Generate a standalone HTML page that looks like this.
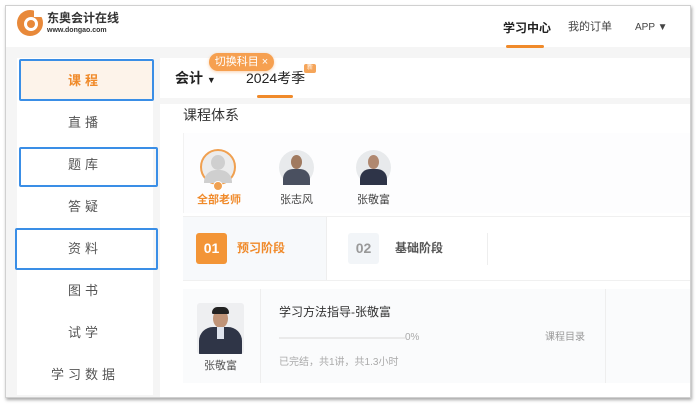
<!DOCTYPE html><html><head><meta charset="utf-8"><style>
*{margin:0;padding:0;box-sizing:border-box}
body{width:700px;height:406px;background:#fff;font-family:"Liberation Sans","Noto Sans CJK SC",sans-serif;position:relative;overflow:hidden}
.a{position:absolute}
.frame{left:5px;top:5px;width:686px;height:393px;border:1px solid #d0d0d0;box-shadow:1px 2px 3px rgba(0,0,0,.35);background:#f5f5f5;overflow:hidden}
.t{white-space:nowrap;line-height:1}
.side{font-size:13px;color:#555;letter-spacing:4px;width:136px;text-align:center;left:17px}
.box{border:2px solid #3a8ee6;border-radius:2px}
.av{border-radius:50%;background:#e8eaec;overflow:hidden}
</style></head><body>
<div class="a frame"></div>
<div class="a" style="left:6px;top:6px;width:684px;height:41px;background:#fff"></div>
<div class="a" style="left:17px;top:10px;width:26px;height:26px;border-radius:50%;background:#e8893a"></div>
<div class="a" style="left:24px;top:17px;width:14px;height:14px;border-radius:50%;background:#fff"></div>
<div class="a" style="left:27px;top:20px;width:8px;height:8px;border-radius:50%;background:#e8893a"></div>
<div class="a" style="left:34px;top:8px;width:10px;height:9px;background:#fff"></div>
<div class="a t" style="left:47px;top:12px;font-size:12px;font-weight:bold;color:#333">东奥会计在线</div>
<div class="a t" style="left:47px;top:27px;font-size:7px;font-weight:bold;color:#333">www.dongao.com</div>
<div class="a t" style="left:503px;top:22px;font-size:12px;color:#222;font-weight:bold">学习中心</div>
<div class="a" style="left:506px;top:45px;width:38px;height:3px;background:#f08a2a;border-radius:2px"></div>
<div class="a t" style="left:568px;top:22px;font-size:11px;color:#444">我的订单</div>
<div class="a t" style="left:635px;top:23px;font-size:10px;color:#444">APP ▼</div>
<!-- sidebar -->
<div class="a" style="left:17px;top:58px;width:136px;height:337px;background:#fff"></div>
<div class="a box" style="left:19px;top:59px;width:135px;height:42px;background:#fdf3ea"></div>
<div class="a t side" style="top:74px;color:#f08a2a;font-weight:bold">课程</div>
<div class="a t side" style="top:116px">直播</div>
<div class="a box" style="left:19px;top:147px;width:139px;height:40px"></div>
<div class="a t side" style="top:158px">题库</div>
<div class="a t side" style="top:200px">答疑</div>
<div class="a box" style="left:15px;top:228px;width:143px;height:42px"></div>
<div class="a t side" style="top:242px">资料</div>
<div class="a t side" style="top:284px">图书</div>
<div class="a t side" style="top:326px">试学</div>
<div class="a t side" style="top:368px">学习数据</div>
<!-- top card -->
<div class="a" style="left:160px;top:58px;width:530px;height:40px;background:#fff"></div>
<div class="a t" style="left:175px;top:71px;font-size:14px;font-weight:bold;color:#222">会计 <span style="font-size:9px">▼</span></div>
<div class="a t" style="left:246px;top:71px;font-size:14px;color:#222">2024考季</div>
<div class="a" style="left:257px;top:95px;width:36px;height:3px;background:#f08a2a;border-radius:2px"></div>
<div class="a t" style="left:304px;top:64px;width:12px;height:9px;background:#f5a55a;color:#fff;font-size:6px;text-align:center;line-height:9px;border-radius:2px">新</div>
<div class="a t" style="left:209px;top:53px;width:65px;height:18px;border-radius:9px;background:#f6a050;color:#fff;font-size:11px;line-height:18px;text-align:center;box-shadow:0 1px 3px rgba(240,140,50,.4)">切换科目 ×</div>
<!-- main -->
<div class="a" style="left:160px;top:104px;width:530px;height:293px;background:#fff"></div>
<div class="a t" style="left:183px;top:108px;font-size:14px;color:#333">课程体系</div>
<div class="a" style="left:183px;top:133px;width:507px;height:80px;background:#fdfdfe;border-left:1px solid #f2f2f2"></div>
<div class="a av" style="left:200px;top:149px;width:36px;height:36px;border:2px solid #f0a050;background:#ececec"></div>
<div class="a" style="left:211px;top:155px;width:14px;height:15px;border-radius:50%;background:#cfcfcf"></div>
<div class="a" style="left:204px;top:170px;width:28px;height:13px;border-radius:12px 12px 0 0;background:#cfcfcf"></div>
<div class="a" style="left:213px;top:181px;width:10px;height:10px;border-radius:50%;background:#f0a050;border:1px solid #fff"></div>
<div class="a t" style="left:197px;top:195px;font-size:11px;font-weight:bold;color:#f08a2a">全部老师</div>
<div class="a av" style="left:279px;top:150px;width:35px;height:35px"></div>
<div class="a" style="left:291px;top:155px;width:11px;height:14px;border-radius:50%;background:#a07a60"></div>
<div class="a" style="left:283px;top:169px;width:27px;height:16px;border-radius:10px 10px 0 0;background:#4a5060"></div>
<div class="a t" style="left:280px;top:195px;font-size:11px;color:#444">张志风</div>
<div class="a av" style="left:356px;top:150px;width:35px;height:35px"></div>
<div class="a" style="left:368px;top:155px;width:11px;height:14px;border-radius:50%;background:#b08870"></div>
<div class="a" style="left:360px;top:169px;width:27px;height:16px;border-radius:10px 10px 0 0;background:#2e3448"></div>
<div class="a t" style="left:357px;top:195px;font-size:11px;color:#444">张敬富</div>
<!-- stages -->
<div class="a" style="left:183px;top:216px;width:507px;height:65px;border-top:1px solid #f0f0f0;border-bottom:1px solid #f0f0f0"></div>
<div class="a" style="left:183px;top:217px;width:144px;height:63px;background:#f7f9fb;border-right:1px solid #eee"></div>
<div class="a t" style="left:196px;top:233px;width:31px;height:31px;border-radius:3px;background:#f39536;color:#fff;font-size:14px;font-weight:bold;line-height:31px;text-align:center">01</div>
<div class="a t" style="left:237px;top:242px;font-size:12px;font-weight:bold;color:#f08a2a">预习阶段</div>
<div class="a t" style="left:348px;top:233px;width:31px;height:31px;border-radius:3px;background:#f2f5f8;color:#999;font-size:14px;font-weight:bold;line-height:31px;text-align:center">02</div>
<div class="a t" style="left:395px;top:242px;font-size:12px;font-weight:bold;color:#555">基础阶段</div>
<div class="a" style="left:487px;top:233px;width:1px;height:32px;background:#eee"></div>
<!-- course -->
<div class="a" style="left:183px;top:289px;width:507px;height:94px;background:#fafbfc"></div>
<div class="a" style="left:260px;top:289px;width:1px;height:94px;background:#eee"></div>
<div class="a" style="left:605px;top:289px;width:1px;height:94px;background:#eee"></div>
<div class="a" style="left:197px;top:303px;width:47px;height:51px;background:#eeeff1;border-radius:3px;overflow:hidden">
<div class="a" style="left:16px;top:6px;width:15px;height:19px;border-radius:50%;background:#c09478"></div>
<div class="a" style="left:15px;top:4px;width:17px;height:7px;border-radius:8px 8px 2px 2px;background:#222"></div>
<div class="a" style="left:2px;top:24px;width:43px;height:28px;border-radius:14px 14px 0 0;background:#2f3547"></div>
<div class="a" style="left:20px;top:24px;width:7px;height:12px;background:#dfe4ee"></div></div>
<div class="a t" style="left:204px;top:361px;font-size:11px;color:#555">张敬富</div>
<div class="a t" style="left:279px;top:306px;font-size:12px;color:#333">学习方法指导-张敬富</div>
<div class="a" style="left:279px;top:337px;width:126px;height:2px;background:#eaeaea"></div>
<div class="a t" style="left:405px;top:333px;font-size:10px;color:#aaa">0%</div>
<div class="a t" style="left:545px;top:333px;font-size:10px;color:#999">课程目录</div>
<div class="a t" style="left:279px;top:358px;font-size:10px;color:#aaa">已完结，共1讲，共1.3小时</div>
</body></html>
